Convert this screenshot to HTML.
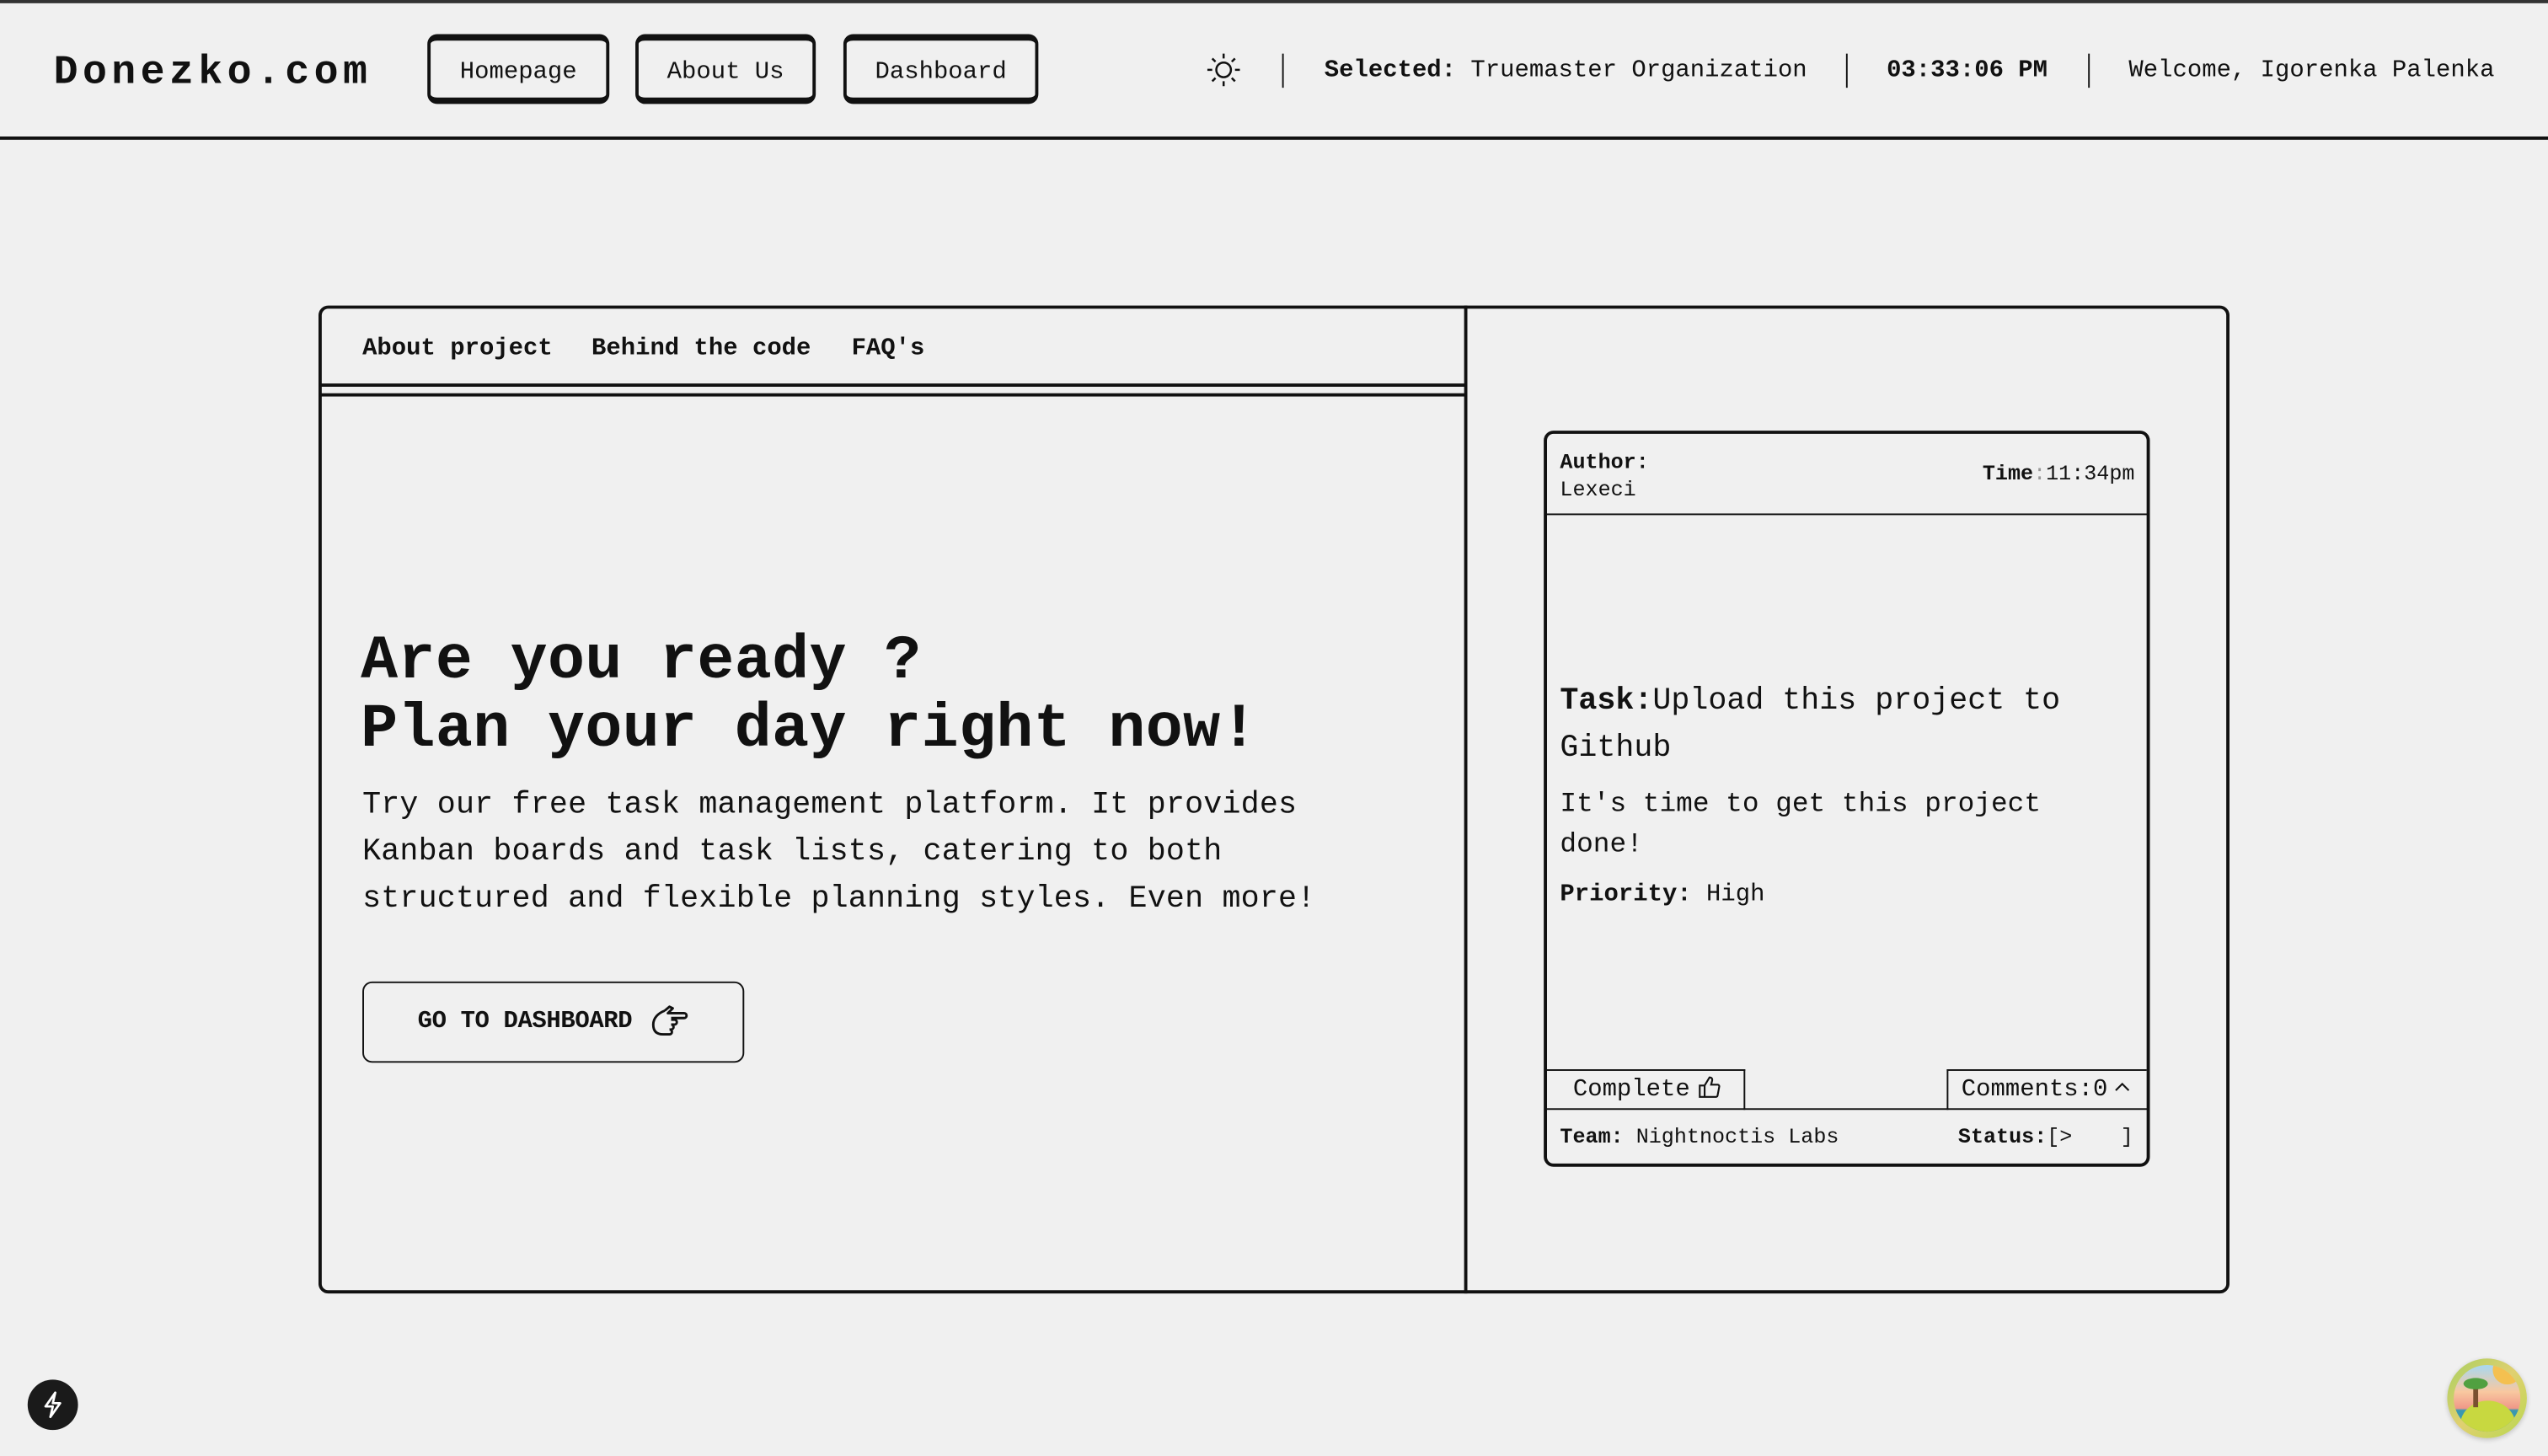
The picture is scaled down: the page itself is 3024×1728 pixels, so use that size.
<!DOCTYPE html>
<html><head><meta charset="utf-8"><style>
html,body{margin:0;padding:0;background:#f0f0f0;overflow:hidden}
#w{width:1568px;height:896px;position:relative;transform:scale(1.928571);transform-origin:0 0;font-family:"Liberation Mono",monospace;color:#111;background:#f0f0f0}
.a{position:absolute;white-space:nowrap}
.nb{position:absolute;top:21px;height:43px;border:2px solid #111;border-top-width:4px;border-bottom-width:4px;border-radius:6px;box-sizing:border-box;font-size:15px;display:flex;align-items:center;justify-content:center;padding-top:3px}
.sep{position:absolute;top:33px;width:1px;height:21px;background:#111}
b{font-weight:bold}
</style></head><body><div id="w">
<div class="a" style="left:0;top:0;width:1568px;height:2px;background:#333"></div>
<div class="a" style="left:0;top:84px;width:1568px;height:1.5px;background:#111"></div>
<div class="a" style="left:33px;top:30px;font-size:25px;font-weight:bold;letter-spacing:2.8px">Donezko.com</div>
<div class="nb" style="left:263px;width:112px">Homepage</div>
<div class="nb" style="left:391px;width:111px">About Us</div>
<div class="nb" style="left:519px;width:120px">Dashboard</div>
<svg class="a" style="left:742px;top:32px" width="22" height="22" viewBox="0 0 22 22" fill="none" stroke="#111" stroke-width="1.3"><circle cx="11" cy="11" r="4.5"/><path d="M11 1v3M11 18v3M1 11h3M18 11h3M4 4l2 2M16 16l2 2M4 18l2-2M16 6l2-2"/></svg>
<div class="sep" style="left:789px"></div>
<div class="a" style="left:815px;top:35px;font-size:15px"><b>Selected:</b> Truemaster Organization</div>
<div class="sep" style="left:1136px"></div>
<div class="a" style="left:1161px;top:35px;font-size:15px;font-weight:bold">03:33:06 PM</div>
<div class="sep" style="left:1285px"></div>
<div class="a" style="left:1310px;top:35px;font-size:15px">Welcome, Igorenka Palenka</div>

<div class="a" style="left:196px;top:188px;width:1176px;height:608px;border:2px solid #111;border-radius:6px;box-sizing:border-box"></div>
<div class="a" style="left:901px;top:188px;width:2px;height:608px;background:#111"></div>
<div class="a" style="left:197px;top:236px;width:705px;height:2px;background:#111"></div>
<div class="a" style="left:197px;top:242px;width:705px;height:2px;background:#111"></div>
<div class="a" style="left:223px;top:206px;font-size:15px;font-weight:bold">About project</div>
<div class="a" style="left:364px;top:206px;font-size:15px;font-weight:bold">Behind the code</div>
<div class="a" style="left:524px;top:206px;font-size:15px;font-weight:bold">FAQ's</div>
<div class="a" style="left:222px;top:387px;font-size:38px;font-weight:bold;line-height:42px;letter-spacing:0.2px">Are you ready ?<br>Plan your day right now!</div>
<div class="a" style="left:223px;top:481px;font-size:19px;line-height:29px;letter-spacing:0.1px">Try our free task management platform. It provides<br>Kanban boards and task lists, catering to both<br>structured and flexible planning styles. Even more!</div>
<div class="a" style="left:223px;top:604px;width:235px;height:50px;border:1.5px solid #111;border-radius:6px;box-sizing:border-box"></div>
<div class="a" style="left:257px;top:620px;font-size:15px;font-weight:bold;letter-spacing:-0.2px">GO TO DASHBOARD</div>
<svg class="a" style="left:400px;top:618px" width="24" height="22" viewBox="0 0 24 22" fill="none" stroke="#111" stroke-width="1.5" stroke-linejoin="round"><path d="M9 4l3-2.5 2 1-3 3h10a1.5 1.5 0 0 1 0 3h-8M13 9.5h2a1.5 1.5 0 0 1 0 3h-2M13 12.5a1.5 1.5 0 0 1 0 3M12 15.5a1.5 1.5 0 0 1 0 3H8c-4 0-6-2-6-6 0-4 3-7 7-8.5"/></svg>

<div class="a" style="left:950px;top:265px;width:373px;height:453px;border:2.5px solid #111;border-radius:6px;box-sizing:border-box"></div>
<div class="a" style="left:951px;top:316px;width:371px;height:1.2px;background:#111"></div>
<div class="a" style="left:960px;top:276px;font-size:13px;line-height:17px"><b>Author:</b><br>Lexeci</div>
<div class="a" style="left:1220px;top:284px;font-size:13px"><b>Time</b><span style="color:#999">:</span>11:34pm</div>
<div class="a" style="left:960px;top:417px;font-size:19px;line-height:29px"><b>Task:</b>Upload this project to<br>Github</div>
<div class="a" style="left:960px;top:483px;font-size:17px;line-height:25px">It's time to get this project<br>done!</div>
<div class="a" style="left:960px;top:542px;font-size:15px"><b>Priority:</b> High</div>
<div class="a" style="left:952px;top:658px;width:122px;height:25px;border:1.2px solid #111;border-left:none;border-bottom:none;box-sizing:border-box"></div>
<div class="a" style="left:1198px;top:658px;width:123px;height:25px;border:1.2px solid #111;border-right:none;border-bottom:none;box-sizing:border-box"></div>
<div class="a" style="left:951px;top:682px;width:371px;height:1.2px;background:#111"></div>
<div class="a" style="left:968px;top:662px;font-size:15px">Complete</div>
<svg class="a" style="left:1045px;top:662px" width="14" height="14" viewBox="0 0 14 14" fill="none" stroke="#111" stroke-width="1.1"><path d="M1 6h3v7H1zM4 6l3-5c1.5 0 2 1 1.5 2.5L8 5.5h4a1 1 0 0 1 1 1.2l-1 5.3a1 1 0 0 1-1 1H4"/></svg>
<div class="a" style="left:1207px;top:662px;font-size:15px">Comments:0</div>
<svg class="a" style="left:1301px;top:665px" width="10" height="8" viewBox="0 0 10 8" fill="none" stroke="#111" stroke-width="1.1"><path d="M1 6l4-4 4 4"/></svg>
<div class="a" style="left:960px;top:692px;font-size:13px"><b>Team:</b> Nightnoctis Labs</div>
<div class="a" style="left:1205px;top:692px;font-size:13px"><b>Status:</b>[&gt;</div>
<div class="a" style="left:1305px;top:692px;font-size:13px">]</div>

<div class="a" style="left:17px;top:849px;width:31px;height:31px;border-radius:50%;background:#1a1a1a"></div>
<svg class="a" style="left:25px;top:856px" width="15" height="17" viewBox="0 0 15 17" fill="none" stroke="#fff" stroke-width="1.4" stroke-linejoin="round"><path d="M9 1L3 9.5h4.5L6 16l6-8.5H7.5z"/></svg>
<div class="a" style="left:1506px;top:836px;width:49px;height:49px;border-radius:50%;background:linear-gradient(135deg,#a8d060,#e0d070 50%,#b8d850);box-shadow:0 1px 3px rgba(0,0,0,.2)"></div>
<div class="a" style="left:1510px;top:840px;width:41px;height:41px;border-radius:50%;overflow:hidden;background:linear-gradient(#a8d8f0,#f8c8a0 40%,#f09888 65%,#3a98b0 68%,#3a98b0 100%)">
<div class="a" style="left:4px;top:22px;width:34px;height:30px;border-radius:50%;background:#c8d840"></div>
<div class="a" style="left:24px;top:-6px;width:18px;height:18px;border-radius:50%;background:#f4c050"></div>
<div class="a" style="left:12px;top:10px;width:3px;height:16px;background:#7a5030"></div>
<div class="a" style="left:6px;top:8px;width:15px;height:7px;border-radius:50%;background:#50a040"></div>
</div>
</div></body></html>
